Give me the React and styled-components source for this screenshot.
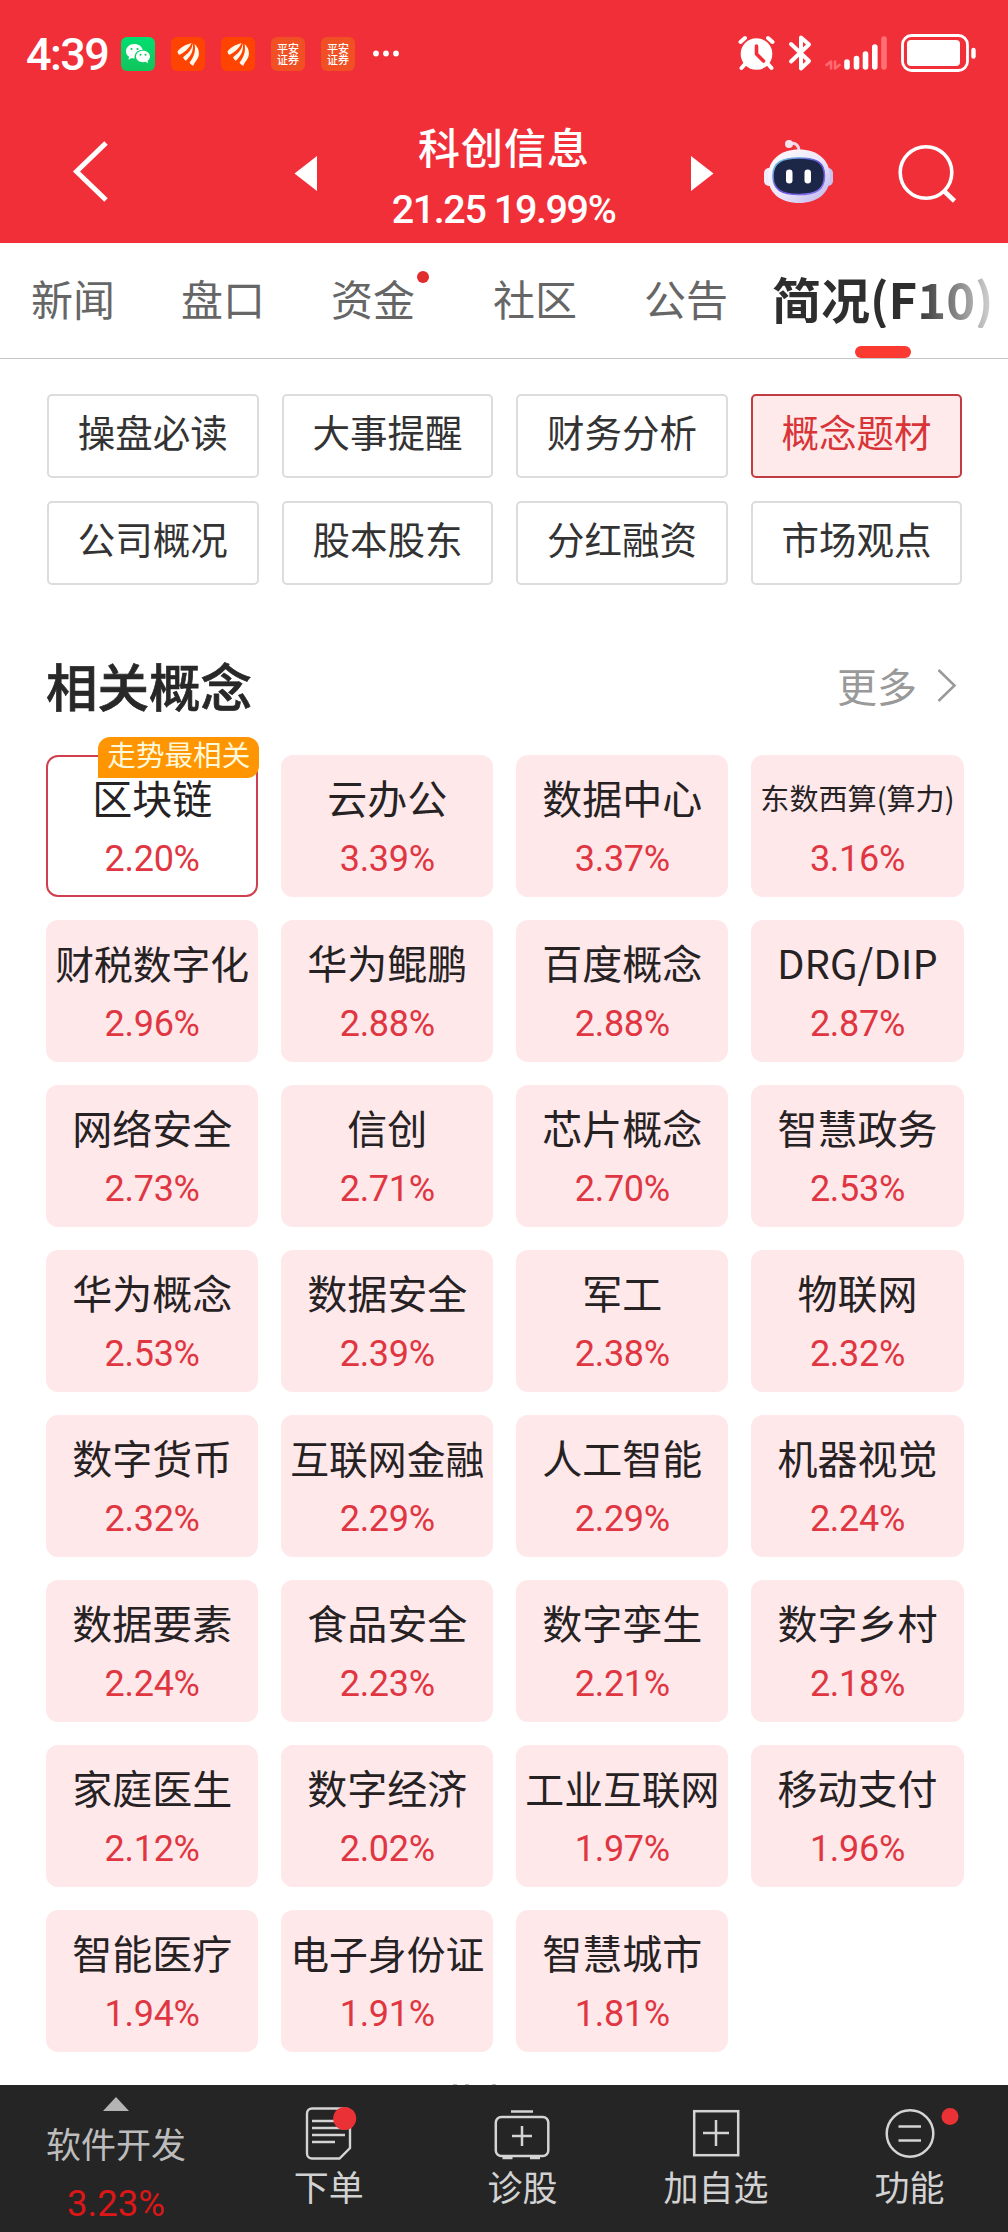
import React from "react";
import styled, { createGlobalStyle } from "styled-components";

const CJK = '"Noto Sans CJK SC", "Noto Sans", sans-serif';
const NUM = 'Roboto, "Noto Sans CJK SC", sans-serif';

const GlobalStyle = createGlobalStyle`
  *, *::before, *::after { box-sizing: border-box; }
  body { margin: 0; background: #fff; }
  svg { display: block; flex: none; }
`;

const Screen = styled.div`
  width: 1008px;
  height: 2232px;
  display: flex;
  flex-direction: column;
  overflow: hidden;
  background: #fff;
  font-family: ${CJK};
  color: #222;
  white-space: nowrap;
`;

const TopArea = styled.header`
  height: 243px;
  flex: none;
  background: #f12f38;
  color: #fff;
`;

const StatusBar = styled.div`
  height: 106px;
  display: flex;
  align-items: center;
  justify-content: space-between;
  padding: 0 29px 0 26px;
`;

const StatusGroup = styled.div`
  display: flex;
  align-items: center;
`;

const Clock = styled.div`
  width: 92px;
  font: 500 45px/60px ${NUM};
  letter-spacing: -1.6px;
  padding-top: 3px;
`;

const AppIcons = styled.div`
  display: flex;
  gap: 16px;
  margin: 2px 17px 0 3px;
`;

const AppIcon = styled.div`
  width: 34px;
  height: 34px;
  border-radius: 6px;
  background: ${(p) => p.$bg};
`;

const BrokerIcon = styled(AppIcon)`
  padding: 6px 5px 0 6px;
  font: 500 11px/10.5px ${CJK};
  white-space: normal;
`;

const TitleBar = styled.div`
  height: 137px;
  display: flex;
  align-items: center;
  padding: 0 48px 0 70px;
`;

const TitleBlock = styled.div`
  width: 374px;
  text-align: center;
`;

const StockName = styled.h1`
  margin: 7px 0 0;
  font: 500 42px/60px ${CJK};
  letter-spacing: 1px;
`;

const StockQuote = styled.div`
  font: 500 39.5px/60px ${NUM};
  letter-spacing: -1.4px;
  margin: 4px 0 0 -1px;
`;

const Spacer = styled.div`
  width: ${(p) => p.$w}px;
  flex: none;
`;

const Tabs = styled.nav`
  height: 116px;
  flex: none;
  display: flex;
  align-items: center;
  padding: 0 0 5px 31px;
  border-bottom: 1px solid #c6c6c6;
`;

const Tab = styled.div`
  position: relative;
  margin-right: ${(p) => p.$gap}px;
  font: 400 42px/60px ${CJK};
  color: #666;
`;

const ActiveTab = styled.div`
  font: 700 49px/60px ${CJK};
  background: linear-gradient(90deg, #2e2e2e 64%, #8a8a8a 84%, #d8d8d8 100%);
  background-clip: text;
  -webkit-background-clip: text;
  color: transparent;
`;

const TabSlot = styled.div`
  position: relative;
`;

const TabDot = styled.i`
  position: absolute;
  left: 86px;
  top: 3px;
  width: 12px;
  height: 12px;
  border-radius: 50%;
  background: #e02b2f;
`;

const TabBar = styled.i`
  position: absolute;
  left: 83px;
  top: 78px;
  width: 56px;
  height: 12px;
  border-radius: 6px;
  background: #fb3a31;
`;

const Content = styled.main`
  flex: 1;
  min-height: 0;
  display: flex;
  flex-direction: column;
`;

const MenuGrid = styled.section`
  display: grid;
  grid-template-columns: repeat(4, 211.6px);
  grid-auto-rows: 84px;
  column-gap: 23px;
  row-gap: 23px;
  padding: 35px 0 0 47px;
`;

const MenuButton = styled.div`
  border: 2px solid ${(p) => (p.$active ? "#c23b40" : "#dcdcdc")};
  border-radius: 5px;
  background: ${(p) => (p.$active ? "#feeaea" : "#fff")};
  color: ${(p) => (p.$active ? "#d93438" : "#333")};
  font: 400 37.5px/70px ${CJK};
  text-align: center;
`;

const SectionHead = styled.div`
  height: 170px;
  display: flex;
  align-items: center;
  justify-content: space-between;
  padding: 30px 51px 0 46px;
`;

const SectionTitle = styled.h2`
  margin: 0;
  font: 500 51.5px/70px ${CJK};
  -webkit-text-stroke: 0.7px #282828;
  color: #282828;
`;

const More = styled.div`
  display: flex;
  align-items: center;
  gap: 20px;
  font: 400 40px/60px ${CJK};
  color: #999;
`;

const CardGrid = styled.section`
  display: grid;
  grid-template-columns: repeat(4, 212.3px);
  grid-auto-rows: 142px;
  column-gap: 22.8px;
  row-gap: 23px;
  padding-left: 46px;
`;

const Card = styled.div`
  position: relative;
  display: flex;
  flex-direction: column;
  align-items: center;
  padding-top: 15.5px;
  border-radius: 12px;
  background: ${(p) => (p.$top ? "#fff" : "#fee8ea")};
  box-shadow: ${(p) => (p.$top ? "inset 0 0 0 2px #cf3f4e" : "none")};
`;

const CardName = styled.div`
  height: 52px;
  font: 400 ${(p) => p.$size}px/52px ${CJK};
  color: #262224;
`;

const CardRate = styled.div`
  margin-top: 6.5px;
  font: 400 36px/60px ${NUM};
  letter-spacing: -0.3px;
  color: #e03642;
`;

const Badge = styled.div`
  position: absolute;
  z-index: 1;
  right: -1px;
  top: -18px;
  width: 161px;
  height: 41px;
  border-radius: 12px 12px 12px 0;
  background: #ff9500;
  color: #fff9dc;
  font: 400 28.6px/34px ${CJK};
  text-align: center;
`;

const NextLine = styled.div`
  display: flex;
  gap: 8px;
  height: 1px;
  margin: 32px 0 0 453px;
`;

const NextMark = styled.i`
  width: 4px;
  height: 1px;
  background: #bbb;
`;

const BottomBar = styled.footer`
  height: 147px;
  flex: none;
  display: flex;
  background: #252525;
  color: #d2d2d2;
  font: 400 35px/48px ${CJK};
`;

const IndexCell = styled.div`
  width: 232px;
  display: flex;
  flex-direction: column;
  align-items: center;
  padding-top: 12px;
  color: #bcbcbc;
`;

const IndexName = styled.div`
  margin-top: 8px;
`;

const IndexRate = styled.div`
  margin-top: 13px;
  font: 400 36.5px/48px ${NUM};
  color: #dc1717;
`;

const Action = styled.div`
  width: 193.6px;
  display: flex;
  flex-direction: column;
  align-items: center;
  padding-top: 15px;
`;

const ActionLabel = styled.div`
  margin-top: 0;
`;

const WeChatLogo = () => (
  <svg width="34" height="34" viewBox="0 0 34 34">
    <path fill="#fff" d="M13.5 7C8.300 7 5 10.300 5 14.300c0 2.300 1.200 4.200 3.100 5.500l-.7 2.900 3.200-1.600c1 .3 2 .4 3 .3C13 16.500 16.500 12.700 21.700 12.800 20.900 9.300 17.600 7 13.500 7z" />
    <path fill="#fff" d="M22 13.700c-4 0-7 2.600-7 5.800s3 5.700 7 5.700c.9 0 1.700-.1 2.500-.4l2.600 1.400-.6-2.400c1.700-1.100 2.500-2.600 2.500-4.300 0-3.200-3-5.800-7-5.800z" />
    <g fill="#0cc95f">
      <circle cx="10.500" cy="12" r="1.100" /><circle cx="16.500" cy="12" r="1.100" />
      <circle cx="19.500" cy="17.700" r="1" /><circle cx="24.500" cy="17.700" r="1" />
    </g>
  </svg>
);

const FeatherLogo = () => (
  <svg width="34" height="34" viewBox="0 0 34 34" fill="#fff8ea">
    <path d="M20.500 6C15 7.500 9 10.500 6.500 14.500c.3 1.500.8 2.500 1.500 3.300C12 16.500 18 12 20.500 6z" />
    <path d="M21.800 6.300C21 13 17 16.500 12 20.200c.6 1.600 1.500 2.700 2.800 3.500C20 19.500 23 13 21.800 6.300z" />
    <path d="M23.500 7C25 14 23 20 18.500 25.500c.8 1.500 2 2.600 3.800 3.200C23 26 27 22.500 27.800 18 28.500 13.500 26.500 9.500 23.500 7z" />
  </svg>
);

const MoreDots = () => (
  <svg width="28" height="40" viewBox="372 33 28 40" fill="#fff">
    <circle cx="376" cy="53.500" r="2.900" /><circle cx="386" cy="53.500" r="2.900" /><circle cx="396" cy="53.500" r="2.900" />
  </svg>
);

const StatusIcons = () => (
  <svg width="242" height="40" viewBox="738 33 242 40" fill="none" stroke="#fff" strokeLinecap="round" strokeLinejoin="round">
    <circle cx="757.500" cy="54" r="15.800" fill="#fff" stroke="none" />
    <path d="M741.500 42l4.500-4M773.500 42l-4.500-4M746 64l-3.500 4M769 64l3.500 4" strokeWidth="4" />
    <path d="M757.500 46v8l7 7" stroke="#f12f38" strokeWidth="3.600" />
    <path d="M792 44l18 17-8 7.500v-31l8 7-18 17" strokeWidth="4" />
    <path d="M832 68.500v-7l-4.500 3.500M836 61.500v7l4.500-3.500" stroke="#ff6a70" strokeWidth="2.600" />
    <path d="M848 62v5M857.500 58.500V67M866.500 54V67M875.800 47V67" strokeWidth="5.600" />
    <path d="M885 39V67" stroke="#ff7075" strokeWidth="5.600" />
    <rect x="903.500" y="35.500" width="65" height="35" rx="9" strokeWidth="2.800" />
    <rect x="908" y="40" width="53" height="26" rx="4" fill="#fff" stroke="none" />
    <path d="M974.500 50v6.500" strokeWidth="4.400" />
  </svg>
);

const BackIcon = () => (
  <svg width="40" height="80" viewBox="70 135 40 80">
    <path d="M106 143L76.500 171.500 106 200" fill="none" stroke="#fff" strokeWidth="5" />
  </svg>
);

const PrevIcon = () => (
  <svg width="23" height="80" viewBox="294 135 23 80"><path d="M294.500 173.500L317 156v35z" fill="#fff" /></svg>
);

const NextIcon = () => (
  <svg width="23" height="80" viewBox="691 135 23 80"><path d="M713.500 173.500L691 156v35z" fill="#fff" /></svg>
);

const RobotIcon = () => (
  <svg width="71" height="80" viewBox="763 135 71 80">
    <defs>
      <linearGradient id="shell" x1="0" y1="0" x2="1" y2="1">
        <stop offset="0" stopColor="#fff" /><stop offset=".55" stopColor="#ebe4f8" /><stop offset="1" stopColor="#b9b2ea" />
      </linearGradient>
      <linearGradient id="rim" x1="0" y1="0" x2="1" y2="1">
        <stop offset="0" stopColor="#6fd3e6" /><stop offset=".5" stopColor="#6a4fd8" /><stop offset="1" stopColor="#8b7bf0" />
      </linearGradient>
    </defs>
    <path d="M789 144c6-2 10 1 10 7" fill="none" stroke="#f3d5e6" strokeWidth="3" />
    <circle cx="789" cy="144" r="4" fill="#f7e3ee" />
    <rect x="764" y="168" width="12" height="18" rx="5" fill="#f1ecfb" />
    <rect x="821" y="168" width="12" height="18" rx="5" fill="#c9c2f0" />
    <path d="M799 149.500c18 0 31 10 31 27s-13 26.500-31 26.500-31-9.500-31-26.500 13-27 31-27z" fill="url(#shell)" />
    <path d="M799 158c17 0 25.500 4 25.500 18s-8.500 18.500-25.500 18.500-26-4.500-26-18.500 9-18 26-18z" fill="#1c2748" stroke="url(#rim)" strokeWidth="1.600" />
    <rect x="786" y="169.500" width="6.500" height="14" rx="3.200" fill="#fff" />
    <rect x="804.500" y="169.500" width="6.500" height="14" rx="3.200" fill="#fff" />
  </svg>
);

const SearchIcon = () => (
  <svg width="62" height="80" viewBox="898 135 62 80" fill="none" stroke="#fff">
    <circle cx="926" cy="172.500" r="25.800" strokeWidth="3.600" />
    <path d="M944 191l10.500 10" strokeWidth="4.500" />
  </svg>
);

const ChevronIcon = () => (
  <svg width="20" height="36" viewBox="0 0 20 36"><path d="M1.500 3L17.500 18.500 1.500 34" fill="none" stroke="#999" strokeWidth="2.500" /></svg>
);

const OrderIcon = () => (
  <svg width="60" height="62" viewBox="299 2100 60 62" fill="none" stroke="#d4d4d4" strokeWidth="2.400">
    <path d="M312 2108.500h33a5 5 0 015 5v34.500l-10.500 10.500h-27.500a5 5 0 01-5-5v-40a5 5 0 015-5z" />
    <path d="M312 2121h28M312 2128h32M312 2135h33M312 2142h23" />
    <circle cx="344.700" cy="2118.500" r="11.500" fill="#ea3136" stroke="none" />
  </svg>
);

const DiagnoseIcon = () => (
  <svg width="60" height="62" viewBox="492.500 2100 60 62" fill="none" stroke="#d4d4d4" strokeWidth="2.500">
    <rect x="496.300" y="2117" width="52.500" height="39" rx="5.500" />
    <path d="M511.500 2111.500h22M522.500 2126v20M512.500 2136h20M503 2158h10M530.500 2158h10" />
  </svg>
);

const AddIcon = () => (
  <svg width="60" height="62" viewBox="686 2100 60 62" fill="none" stroke="#d4d4d4" strokeWidth="2.500">
    <rect x="694.200" y="2111.200" width="44" height="44" />
    <path d="M716 2120v26M703 2133h26" />
  </svg>
);

const FunctionIcon = () => (
  <svg width="100" height="62" viewBox="860.500 2100 100 62" fill="none" stroke="#d4d4d4" strokeWidth="2.500">
    <circle cx="910.500" cy="2133.500" r="23.300" />
    <path d="M899 2126.500h22.500M899 2140.500h22.500" />
    <circle cx="950.500" cy="2116.500" r="8.500" fill="#ea3136" stroke="none" />
  </svg>
);

const TABS = [
  { name: "新闻", gap: 66 },
  { name: "盘口", gap: 66 },
  { name: "资金", gap: 78 },
  { name: "社区", gap: 67 },
  { name: "公告", gap: 44 },
];

const MENU = ["操盘必读", "大事提醒", "财务分析", "概念题材", "公司概况", "股本股东", "分红融资", "市场观点"];

const CONCEPTS = [
  ["区块链", "2.20%"], ["云办公", "3.39%"], ["数据中心", "3.37%"], ["东数西算(算力)", "3.16%"],
  ["财税数字化", "2.96%"], ["华为鲲鹏", "2.88%"], ["百度概念", "2.88%"], ["DRG/DIP", "2.87%"],
  ["网络安全", "2.73%"], ["信创", "2.71%"], ["芯片概念", "2.70%"], ["智慧政务", "2.53%"],
  ["华为概念", "2.53%"], ["数据安全", "2.39%"], ["军工", "2.38%"], ["物联网", "2.32%"],
  ["数字货币", "2.32%"], ["互联网金融", "2.29%"], ["人工智能", "2.29%"], ["机器视觉", "2.24%"],
  ["数据要素", "2.24%"], ["食品安全", "2.23%"], ["数字孪生", "2.21%"], ["数字乡村", "2.18%"],
  ["家庭医生", "2.12%"], ["数字经济", "2.02%"], ["工业互联网", "1.97%"], ["移动支付", "1.96%"],
  ["智能医疗", "1.94%"], ["电子身份证", "1.91%"], ["智慧城市", "1.81%"],
];

const ACTIONS = [
  { label: "下单", Icon: OrderIcon },
  { label: "诊股", Icon: DiagnoseIcon },
  { label: "加自选", Icon: AddIcon },
  { label: "功能", Icon: FunctionIcon },
];

const nameSize = (name) => {
  if (name.includes("(")) return 29.1;
  return name.length === 5 ? 38.8 : 40;
};

export default function App() {
  return (
    <Screen>
      <GlobalStyle />
      <TopArea>
        <StatusBar>
          <StatusGroup>
            <Clock>4:39</Clock>
            <AppIcons>
              <AppIcon $bg="linear-gradient(#00e070, #12c45c)"><WeChatLogo /></AppIcon>
              <AppIcon $bg="#ff4300"><FeatherLogo /></AppIcon>
              <AppIcon $bg="#ff4300"><FeatherLogo /></AppIcon>
              <BrokerIcon $bg="#f05023">平安证券</BrokerIcon>
              <BrokerIcon $bg="#f05023">平安证券</BrokerIcon>
            </AppIcons>
            <MoreDots />
          </StatusGroup>
          <StatusIcons />
        </StatusBar>
        <TitleBar>
          <BackIcon />
          <Spacer $w={184} />
          <PrevIcon />
          <TitleBlock>
            <StockName>科创信息</StockName>
            <StockQuote>21.25 19.99%</StockQuote>
          </TitleBlock>
          <NextIcon />
          <Spacer $w={49} />
          <RobotIcon />
          <Spacer $w={64} />
          <SearchIcon />
        </TitleBar>
      </TopArea>
      <Tabs>
        {TABS.map((t) => (
          <Tab key={t.name} $gap={t.gap}>
            {t.name}
            {t.name === "资金" && <TabDot />}
          </Tab>
        ))}
        <TabSlot>
          <ActiveTab>简况(F10)</ActiveTab>
          <TabBar />
        </TabSlot>
      </Tabs>
      <Content>
        <MenuGrid>
          {MENU.map((m) => (
            <MenuButton key={m} $active={m === "概念题材"}>{m}</MenuButton>
          ))}
        </MenuGrid>
        <SectionHead>
          <SectionTitle>相关概念</SectionTitle>
          <More>
            更多
            <ChevronIcon />
          </More>
        </SectionHead>
        <CardGrid>
          {CONCEPTS.map(([name, rate], i) => (
            <Card key={name} $top={i === 0}>
              {i === 0 && <Badge>走势最相关</Badge>}
              <CardName $size={nameSize(name)}>{name}</CardName>
              <CardRate>{rate}</CardRate>
            </Card>
          ))}
        </CardGrid>
        <NextLine>
          <NextMark />
          <NextMark />
          <Spacer $w={7} />
          <NextMark />
        </NextLine>
      </Content>
      <BottomBar>
        <IndexCell>
          <svg width="26" height="14" viewBox="0 0 26 14"><path d="M13 0l13 14H0z" fill="#b4b4b4" /></svg>
          <IndexName>软件开发</IndexName>
          <IndexRate>3.23%</IndexRate>
        </IndexCell>
        {ACTIONS.map(({ label, Icon }) => (
          <Action key={label}>
            <Icon />
            <ActionLabel>{label}</ActionLabel>
          </Action>
        ))}
      </BottomBar>
    </Screen>
  );
}
